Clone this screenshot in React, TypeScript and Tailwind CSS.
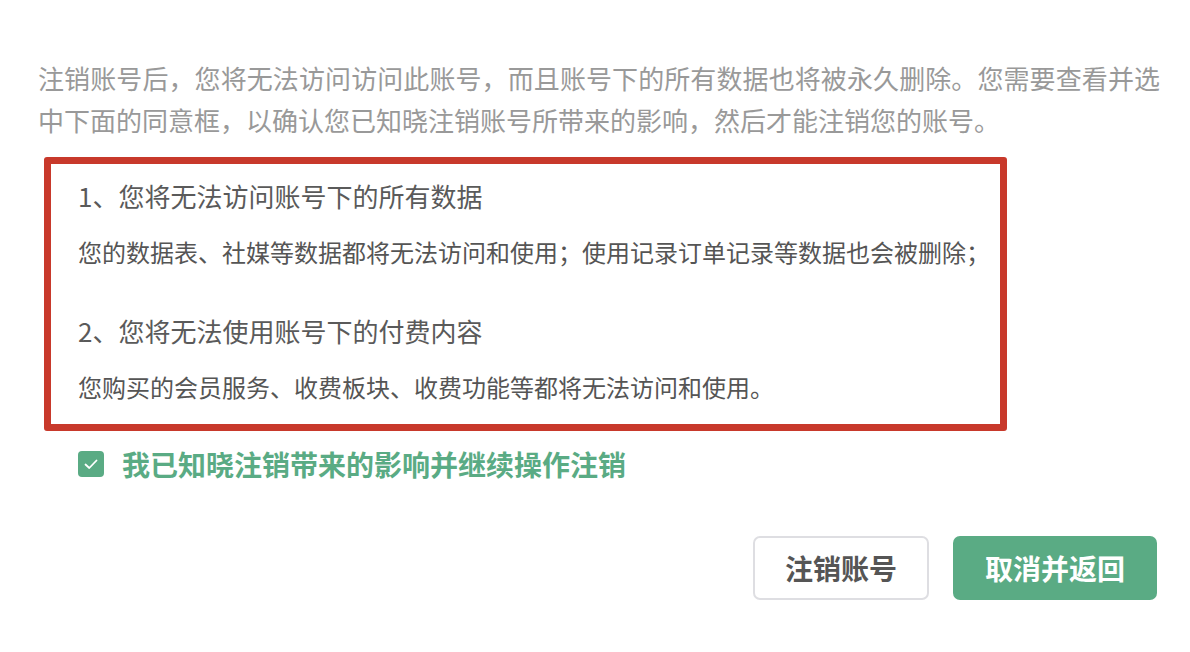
// 注销账号确认页 — 影响说明 + 同意框 + 操作按钮

const FONT = { fontFamily: '"Noto Sans CJK SC", "Noto Sans", sans-serif' }

const IMPACTS = [
  {
    title: '1、您将无法访问账号下的所有数据',
    desc: '您的数据表、社媒等数据都将无法访问和使用；使用记录订单记录等数据也会被删除；',
  },
  {
    title: '2、您将无法使用账号下的付费内容',
    desc: '您购买的会员服务、收费板块、收费功能等都将无法访问和使用。',
  },
]

function CheckIcon() {
  return (
    <svg width="16" height="16" viewBox="0 0 16 16" fill="none">
      <path d="M2.5 8.5 L6.3 12 L13.5 4.5" stroke="white" strokeWidth="1.8" strokeLinecap="round" strokeLinejoin="round" />
    </svg>
  )
}

export default function App() {
  return (
    <div className="w-[1190px] h-[652px] bg-white overflow-hidden" style={FONT}>
      <div className="pl-[38px] pr-[30px] pt-[57px] flex flex-col">
        {/* 说明文字 */}
        <p className="text-[26px] leading-[42px] text-[#999999] text-justify">
          注销账号后，您将无法访问访问此账号，而且账号下的所有数据也将被永久删除。您需要查看并选中下面的同意框，以确认您已知晓注销账号所带来的影响，然后才能注销您的账号。
        </p>

        {/* 影响列表 */}
        <div className="mt-[16px] ml-[6px] w-[963px] border-[7px] border-[#c8392b] rounded-[3px] pl-[27px] pt-[14px] pb-[19px] flex flex-col">
          {IMPACTS.map((item, i) => (
            <div key={i} className={i > 0 ? 'mt-[43px]' : ''}>
              <p className="text-[26px] leading-[36px] text-[#5a5a5a]">{item.title}</p>
              <p className="mt-[20px] text-[24px] leading-[36px] text-[#555555]">{item.desc}</p>
            </div>
          ))}
        </div>

        {/* 同意框 */}
        <label className="mt-[13px] ml-[40px] flex items-center gap-[18px]">
          <span className="w-[26px] h-[26px] shrink-0 rounded-[4px] bg-[#5aab84] flex items-center justify-center">
            <CheckIcon />
          </span>
          <span className="text-[28px] leading-[40px] font-bold text-[#5aab84]">我已知晓注销带来的影响并继续操作注销</span>
        </label>

        {/* 按钮 */}
        <div className="mt-[52px] mr-[3px] flex justify-end gap-[24px]">
          <button className="h-[64px] w-[176px] rounded-[7px] border-2 border-[#dedee2] bg-white text-[28px] font-bold text-[#555555] flex items-center justify-center">
            注销账号
          </button>
          <button className="h-[64px] w-[204px] rounded-[7px] bg-[#5aab84] text-[28px] font-bold text-white flex items-center justify-center">
            取消并返回
          </button>
        </div>
      </div>
    </div>
  )
}
